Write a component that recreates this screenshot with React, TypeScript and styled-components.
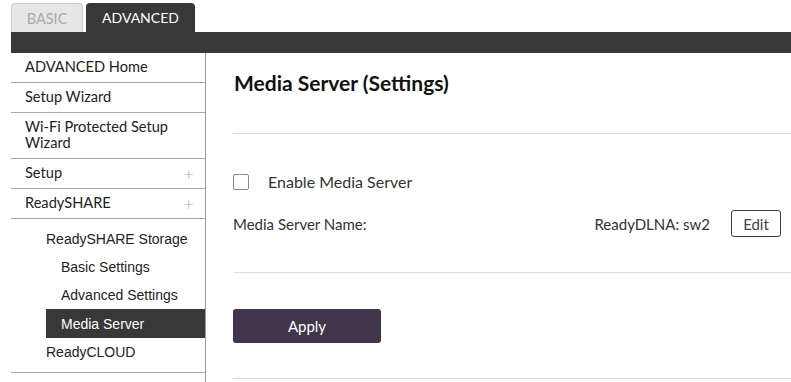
import React, { useState } from "react";
import styled, { createGlobalStyle } from "styled-components";

const GlobalStyle = createGlobalStyle`
  html, body {
    margin: 0;
    padding: 0;
    background: #fff;
    font-family: "Lato", "Open Sans", sans-serif;
    color: #333;
  }
`;

const Page = styled.div`
  width: 791px;
  height: 382px;
  overflow: hidden;
  padding-left: 11px;
  box-sizing: border-box;
`;

const TabRow = styled.div`
  display: flex;
  gap: 3px;
  padding-top: 3px;
  height: 29px;
`;

const Tab = styled.div<{ active?: boolean }>`
  height: 29px;
  box-sizing: border-box;
  display: flex;
  align-items: center;
  justify-content: center;
  font-size: ${(p) => (p.active ? "14px" : "14.5px")};
  border-radius: 4px 4px 0 0;
  background: ${(p) => (p.active ? "#383838" : "#e6e6e6")};
  color: ${(p) => (p.active ? "#fff" : "#aaa")};
  border: ${(p) => (p.active ? "none" : "1px solid #ccc")};
  border-bottom: none;
  width: ${(p) => (p.active ? "109px" : "72px")};
`;

const DarkBar = styled.div`
  height: 21px;
  background: #383838;
`;

const Body = styled.div`
  display: flex;
  height: 329px;
`;

const Sidebar = styled.nav`
  width: 194px;
  flex: none;
  border-right: 1px solid #999;
  display: flex;
  flex-direction: column;
`;

const MenuItem = styled.div`
  display: flex;
  align-items: center;
  justify-content: space-between;
  padding: 6px 11px 7px 14px;
  min-height: 16px;
  font-size: 14.6px;
  line-height: 16px;
  border-bottom: 1px solid #aaa;
  color: #222;
`;

const Plus = styled.span`
  color: #aaa;
  font-size: 18px;
  font-weight: 300;
  line-height: 16px;
`;

const SubGroup = styled.div`
  padding: 6px 0 6px 35px;
  border-bottom: 1px solid #aaa;
  display: flex;
  flex-direction: column;
  font-family: "Liberation Sans", Arial, sans-serif;
`;

const SubItem = styled.div<{ level: number; active?: boolean }>`
  height: ${(p) => (p.active ? "29px" : "28px")};
  display: flex;
  align-items: center;
  font-size: 14px;
  padding-left: ${(p) => (p.level === 2 ? "15px" : "0")};
  background: ${(p) => (p.active ? "#383838" : "transparent")};
  color: ${(p) => (p.active ? "#fff" : "#222")};
`;

const Main = styled.main`
  flex: 1;
  padding-left: 27px;
  display: flex;
  flex-direction: column;
`;

const Title = styled.h1`
  margin: 0;
  font-size: 21px;
  font-weight: 700;
  color: #111;
  box-sizing: border-box;
  border-bottom: 1px solid #dcdcdc;
  padding: 17px 0 0 1px;
  height: 81px;
  display: flex;
  align-items: flex-start;
`;

const Section = styled.div`
  padding-top: 38px;
  height: 139px;
  box-sizing: border-box;
  border-bottom: 1px solid #d6dde0;
`;

const CheckRow = styled.label`
  display: flex;
  align-items: center;
  gap: 19px;
  font-size: 16px;
  color: #333;
`;

const Box = styled.span<{ checked: boolean }>`
  width: 14px;
  height: 14px;
  border: 1px solid #888;
  border-radius: 2px;
  background: ${(p) => (p.checked ? "#3f3549" : "#fff")};
`;

const NameRow = styled.div`
  display: flex;
  align-items: center;
  margin-top: 19px;
  font-size: 15px;
  color: #333;
  padding-right: 10px;
`;

const NameValue = styled.span`
  margin-left: auto;
  margin-right: 21px;
`;

const EditButton = styled.button`
  font-family: inherit;
  font-size: 15px;
  color: #444;
  background: #fff;
  border: 1px solid #3f3549;
  border-radius: 3px;
  width: 50px;
  height: 27px;
  padding: 0;
`;

const ApplyArea = styled.div`
  padding-top: 36px;
  height: 106px;
  box-sizing: border-box;
  border-bottom: 1px solid #d6dde0;
`;

const ApplyButton = styled.button`
  width: 148px;
  height: 34px;
  background: #40354b;
  color: #fff;
  border: none;
  border-radius: 3px;
  font-family: inherit;
  font-size: 15px;
`;

export default function App() {
  const [enabled, setEnabled] = useState(false);

  return (
    <>
      <GlobalStyle />
      <Page>
        <TabRow>
          <Tab>BASIC</Tab>
          <Tab active>ADVANCED</Tab>
        </TabRow>
        <DarkBar />
        <Body>
          <Sidebar>
            <MenuItem>ADVANCED Home</MenuItem>
            <MenuItem>Setup Wizard</MenuItem>
            <MenuItem>
              Wi-Fi Protected Setup
              <br />
              Wizard
            </MenuItem>
            <MenuItem>
              Setup <Plus>+</Plus>
            </MenuItem>
            <MenuItem>
              ReadySHARE <Plus>+</Plus>
            </MenuItem>
            <SubGroup>
              <SubItem level={1}>ReadySHARE Storage</SubItem>
              <SubItem level={2}>Basic Settings</SubItem>
              <SubItem level={2}>Advanced Settings</SubItem>
              <SubItem level={2} active>
                Media Server
              </SubItem>
              <SubItem level={1}>ReadyCLOUD</SubItem>
            </SubGroup>
          </Sidebar>
          <Main>
            <Title>Media Server (Settings)</Title>
            <Section>
              <CheckRow onClick={() => setEnabled(!enabled)}>
                <Box checked={enabled} />
                Enable Media Server
              </CheckRow>
              <NameRow>
                Media Server Name:
                <NameValue>ReadyDLNA: sw2</NameValue>
                <EditButton>Edit</EditButton>
              </NameRow>
            </Section>
            <ApplyArea>
              <ApplyButton>Apply</ApplyButton>
            </ApplyArea>
          </Main>
        </Body>
      </Page>
    </>
  );
}
